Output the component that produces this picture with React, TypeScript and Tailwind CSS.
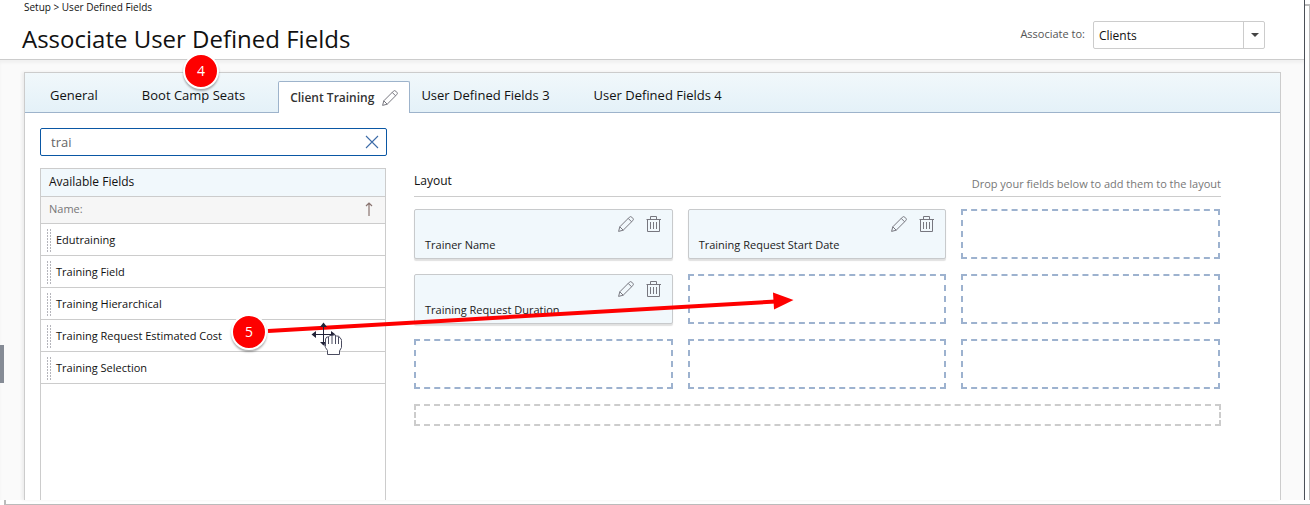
import { useState } from 'react';

type Tab = {
  label: string;
};

const tabs: Tab[] = [
  { label: 'General' },
  { label: 'Boot Camp Seats' },
  { label: 'Client Training' },
  { label: 'User Defined Fields 3' },
  { label: 'User Defined Fields 4' },
];

const availableFields: string[] = [
  'Edutraining',
  'Training Field',
  'Training Hierarchical',
  'Training Request Estimated Cost',
  'Training Selection',
];

// null is an empty drop slot
const slots: (string | null)[] = [
  'Trainer Name',
  'Training Request Start Date',
  null,
  'Training Request Duration',
  null,
  null,
  null,
  null,
  null,
];

const PencilIcon = ({ className = '' }: { className?: string }) => (
  <svg viewBox="0 0 16 16" className={`h-4 w-4 shrink-0 ${className}`} fill="none" stroke="#77777f" strokeWidth="1" strokeLinejoin="round" aria-hidden="true">
    <path d="M0.6 15.4 L1.8 10.8 L11.4 1.2 Q12.6 0 13.8 1.2 L14.8 2.2 Q16 3.4 14.8 4.6 L5.2 14.2 Z" />
    <path d="M10.2 2.4 L13.6 5.8 M1.8 10.8 L5.2 14.2" />
  </svg>
);

const TrashIcon = () => (
  <svg viewBox="0 0 16 16" className="h-4 w-4 shrink-0" fill="none" stroke="#77777f" strokeWidth="1" aria-hidden="true">
    <path d="M0.5 3.5 H15 M4.5 3.5 V0.5 H10.5 V3.5 M1.5 3.5 V15.5 H13.5 V3.5" />
    <path d="M4.5 6 V13 M7.5 6 V13 M10.5 6 V13" />
  </svg>
);

const GripIcon = () => (
  <svg viewBox="0 0 5 24" className="h-6 w-[5px] shrink-0" stroke="#b5b5bb" strokeWidth="1" strokeDasharray="2 1" aria-hidden="true">
    <path d="M0.5 0 V24 M3.5 0 V24" />
  </svg>
);

const FieldCard = ({ name }: { name: string }) => (
  <div className="flex h-[50px] flex-col justify-between rounded-xs border border-[#c8cacc] bg-[#f1f8fc] px-2.5 pt-1.5 pb-[3px] shadow-[0_2px_1px_rgba(0,0,0,0.12)]">
    <div className="flex justify-end gap-3">
      <button type="button" aria-label={`Edit ${name}`}>
        <PencilIcon />
      </button>
      <button type="button" aria-label={`Delete ${name}`}>
        <TrashIcon />
      </button>
    </div>
    <span className="text-[11px] leading-5 text-[#222]">{name}</span>
  </div>
);

const StepBadge = ({ step, className }: { step: number; className: string }) => (
  <span
    className={`pointer-events-none absolute z-10 flex h-9 w-9 items-center justify-center rounded-full border-2 border-white bg-[#fe0000] text-sm text-white shadow-[0_2px_2px_rgba(0,0,0,0.3)] ${className}`}
  >
    {step}
  </span>
);

const MoveCursor = () => (
  <svg viewBox="0 0 32 34" className="pointer-events-none absolute top-[322px] left-[311px] z-20 h-[34px] w-8" aria-hidden="true">
    <path d="M12.5 2 V22 M2 12.5 H22" stroke="#222338" strokeWidth="1" fill="none" />
    <path d="M12.5 0.5 L16 5 H9 Z M0.5 12.5 L5 9 V16 Z M24.5 12.5 L20 9 V16 Z M12.5 23.5 L9 20 H16 Z" fill="#222338" />
    <path
      d="M16.5 32.5 V28.5 L14.5 25.5 L13.5 22.5 L14.5 20.5 V17 Q15.5 14 17.5 15 Q18.5 12.5 21 13.5 Q23.5 12 25.5 14 Q28.5 13.5 29 16 Q30.5 16.5 30.5 18.5 V25.5 L28.5 29 V32.5 Z"
      fill="#fff"
      stroke="#4b4c60"
      strokeWidth="1"
    />
    <path d="M14.5 20 V24 M17.5 15 V22 M21 14 V22 M24.5 14 V22 M27.5 15 V22" stroke="#4b4c60" strokeWidth="1" />
  </svg>
);

// Red arrow from the dragged row to its drop slot
const DragArrow = () => (
  <svg viewBox="0 0 530 44" className="pointer-events-none absolute top-[290px] left-[266px] z-10 h-11 w-[530px]" aria-hidden="true">
    <path d="M2 41 L510 11.5" stroke="#fe0000" strokeWidth="4" />
    <path d="M507 2.5 L527.5 10 L508 19.5 Z" fill="#fe0000" />
  </svg>
);

const App: React.FC = () => {
  const [activeTab, setActiveTab] = useState(2);
  const [query, setQuery] = useState('trai');

  return (
    <div className="relative flex min-h-screen flex-col overflow-hidden bg-white font-['Open_Sans',sans-serif] text-[#111]">
      <div className="flex flex-1">
        <div className="flex min-w-0 flex-1 flex-col border-r border-[#4a4f57]">
          <header className="flex h-[60px] items-start justify-between border-b border-[#ccc] pr-[39px] pl-[22px]">
            <div>
              <nav className="pl-0.5 text-[10px] leading-[14px]">Setup &gt; User Defined Fields</nav>
              <h1 className="pt-[9px] text-2xl leading-8">Associate User Defined Fields</h1>
            </div>
            <div className="flex items-center gap-2 pt-[21px]">
              <label htmlFor="associate" className="pb-0.5 text-[11px] text-[#555]">
                Associate to:
              </label>
              <div className="relative">
                <select
                  id="associate"
                  defaultValue="Clients"
                  className="h-7 w-[172px] appearance-none rounded-xs border border-[#ccc] bg-white px-[5px] pt-0.5 text-xs"
                >
                  <option>Clients</option>
                </select>
                <span className="pointer-events-none absolute inset-y-0 right-0 flex w-[22px] items-center justify-center border-l border-[#ccc]">
                  <svg viewBox="0 0 8 4" className="h-1 w-2" aria-hidden="true">
                    <path d="M0 0 H8 L4 4 Z" fill="#444" />
                  </svg>
                </span>
              </div>
            </div>
          </header>

          <main className="flex flex-1 bg-[#fafafa] pt-3 pr-[23px] pl-6 shadow-[inset_0_3px_3px_rgba(0,0,0,0.04)]">
            <section className="flex min-w-0 flex-1 flex-col border-x border-t border-[#ccc] bg-white shadow-[-2px_0_3px_rgba(0,0,0,0.06)]">
              <div role="tablist" className="flex h-10 items-end border-b border-[#9db3cb] bg-linear-to-b from-[#f1f8fb] to-[#e4f1f8] pl-3.5">
                {tabs.map((tab, i) => (
                  <button
                    key={tab.label}
                    type="button"
                    role="tab"
                    aria-selected={i === activeTab}
                    onClick={() => setActiveTab(i)}
                    className={
                      i === activeTab
                        ? '-mb-px flex h-8 items-center gap-2 rounded-t-xs border border-b-0 border-[#9db3cb] bg-white px-[11px] text-xs font-semibold text-[#333]'
                        : 'flex h-8 items-center gap-1.5 border border-transparent px-2.5 text-[13px]'
                    }
                  >
                    {tab.label}
                    <PencilIcon className={i === activeTab ? '' : 'invisible'} />
                  </button>
                ))}
              </div>

              <div className="flex flex-1 gap-[27px] pt-[15px] pr-[59px] pl-[15px]">
                <aside className="flex w-[347px] shrink-0 flex-col gap-3">
                  <div className="flex h-7 items-center rounded-xs border border-[#0a57a4] bg-white pr-[7px] pl-2.5">
                    <input
                      type="text"
                      aria-label="Search fields"
                      value={query}
                      onChange={(e) => setQuery(e.target.value)}
                      className="min-w-0 flex-1 bg-transparent pt-0.5 text-[13px] text-[#666] outline-none"
                    />
                    <button type="button" aria-label="Clear search" onClick={() => setQuery('')}>
                      <svg viewBox="0 0 14 14" className="h-3.5 w-3.5" stroke="#3c6ba8" strokeWidth="1.1" aria-hidden="true">
                        <path d="M1 1 L13 13 M13 1 L1 13" />
                      </svg>
                    </button>
                  </div>

                  <div className="mr-px flex flex-1 flex-col border-x border-t border-[#ccc]">
                    <h2 className="h-7 border-b border-[#ccc] bg-[#f1f8fc] px-2 text-xs leading-[26px]">Available Fields</h2>
                    <div className="flex h-[27px] items-center justify-between border-b border-[#ccc] bg-[#f6f6f6] pr-3 pb-0.5 pl-2 text-[11px] text-[#777]">
                      Name:
                      <svg viewBox="0 0 8 14" className="h-3.5 w-2" fill="none" stroke="#8a7470" strokeWidth="1.2" aria-hidden="true">
                        <path d="M4 14 V1 M1 4 L4 1 L7 4" />
                      </svg>
                    </div>
                    <ul>
                      {availableFields.map((field) => (
                        <li key={field} className="flex h-8 items-center gap-1 border-b border-[#ccc] pt-0.5 pl-1.5 text-[11px]">
                          <GripIcon />
                          {field}
                        </li>
                      ))}
                    </ul>
                  </div>
                </aside>

                <div className="min-w-0 flex-1 pt-[43px]">
                  <div className="flex h-[26px] items-start justify-between border-b border-[#ccc]">
                    <h2 className="text-xs leading-5">Layout</h2>
                    <p className="text-[11px] leading-[26px] text-[#777]">Drop your fields below to add them to the layout</p>
                  </div>
                  <div className="grid grid-cols-3 gap-[15px] pt-3 pr-px">
                    {slots.map((slot, i) =>
                      slot ? (
                        <FieldCard key={slot} name={slot} />
                      ) : (
                        <div key={`slot-${i}`} className="h-[50px] border-2 border-dashed border-[#9db2cf]" />
                      ),
                    )}
                  </div>
                  <div className="mt-[15px] h-[22px] border-2 border-dashed border-[#ccc]" />
                </div>
              </div>
            </section>
          </main>
        </div>
        <div className="mt-1 w-[5px] border-t-2 border-r border-[#bbb]" />
      </div>
      <div className="ml-1 h-[5px] border-b border-l-2 border-[#bbb]" />

      <span className="absolute top-[345px] left-0 h-[38px] w-1 bg-[#858b95]" />
      <StepBadge step={4} className="top-[53px] left-[183px]" />
      <StepBadge step={5} className="top-[314px] left-[231px]" />
      <DragArrow />
      <MoveCursor />
    </div>
  );
};

export default App;
